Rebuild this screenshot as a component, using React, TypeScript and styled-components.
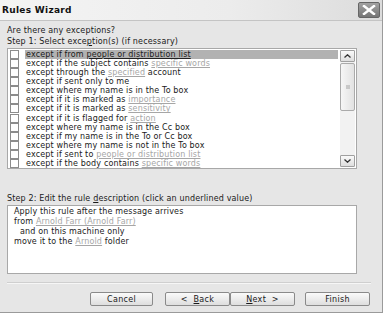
import React from 'react';
import styled, { createGlobalStyle } from 'styled-components';

const GlobalStyle = createGlobalStyle`
    html, body {
        margin: 0;
        padding: 0;
        background: #ffffff;
    }
    body {
        font-family: 'DejaVu Sans', Verdana, sans-serif;
        font-size: 8px;
        color: #1a1a1a;
    }
`;

// --- Window frame ---

const Window = styled.div`
    width: 382px;
    height: 312px;
    background: #e6e6e6;
    border-right: 1px solid #9a9a9a;
    border-bottom: 1px solid #9a9a9a;
    display: flex;
    flex-direction: column;
`;

const TitleBar = styled.div`
    height: 20px;
    flex-shrink: 0;
    display: flex;
    align-items: center;
    justify-content: space-between;
    padding: 0 2px 0 2px;
    background: linear-gradient(to right, #f4f4f4 0%, #ececec 60%, #dcdcdc 100%);
    border-bottom: 1px solid #c4c4c4;
`;

const Title = styled.span`
    font-weight: bold;
    font-size: 9px;
    letter-spacing: 0.3px;
    color: #111;
`;

const CloseButton = styled.div`
    width: 22px;
    height: 16px;
    border-radius: 2px;
    background: linear-gradient(to bottom, #a2a2a2, #767676);
    border: 1px solid #666;
    display: flex;
    align-items: center;
    justify-content: center;
    box-sizing: border-box;
`;

const Body = styled.div`
    flex: 1;
    display: flex;
    flex-direction: column;
    padding: 4px 0 0 7px;
`;

const Label = styled.div<{ gap?: number }>`
    height: 11px;
    line-height: 11px;
    margin-top: ${p => p.gap ?? 0}px;
    white-space: nowrap;
    letter-spacing: 0.15px;
`;

// --- Exception list ---

const ListBox = styled.div`
    width: 350px;
    height: 121px;
    margin-top: 1px;
    box-sizing: border-box;
    background: #fff;
    border: 1px solid #a8a8a8;
    display: flex;
`;

const Rows = styled.div`
    flex: 1;
    padding-top: 0.5px;
    overflow: hidden;
`;

const Row = styled.div`
    height: 9.15px;
    display: flex;
    align-items: center;
    white-space: nowrap;
    letter-spacing: 0.15px;
`;

const Check = styled.span`
    width: 7px;
    height: 7px;
    margin: 0 6px 0 2px;
    border: 1px solid #8c8c8c;
    background: #fff;
    flex-shrink: 0;
`;

const RowText = styled.span<{ selected?: boolean }>`
    flex: 1;
    height: 9px;
    line-height: 9px;
    padding-left: 1px;
    background: ${p => (p.selected ? '#b2b2b2' : 'transparent')};
`;

const Link = styled.span`
    color: #a6a6a6;
    text-decoration: underline;
`;

const SelectedLink = styled.span`
    color: #222;
    text-decoration: underline;
`;

const ScrollBar = styled.div`
    width: 15px;
    margin: 1px 1px 1px 2px;
    display: flex;
    flex-direction: column;
    background: #f2f2f2;
`;

const ScrollButton = styled.div`
    height: 10px;
    border: 1px solid #a0a0a0;
    border-radius: 1px;
    background: linear-gradient(to bottom, #fafafa, #dedede);
    display: flex;
    align-items: center;
    justify-content: center;
`;

const Track = styled.div`
    flex: 1;
    padding: 1px 0;
    display: flex;
    flex-direction: column;
`;

const Thumb = styled.div`
    height: 46px;
    border: 1px solid #aaa;
    border-radius: 2px;
    background: linear-gradient(to right, #f6f6f6, #e2e2e2);
    display: flex;
    align-items: center;
    justify-content: center;
`;

const Grip = styled.div`
    width: 4px;
    height: 4px;
    background: #c8c8c8;
`;

// --- Description ---

const DescBox = styled.div`
    width: 350px;
    height: 69px;
    margin-top: 1px;
    box-sizing: border-box;
    background: #fff;
    border: 1px solid #a8a8a8;
    padding: 1px 0 0 6px;
`;

const DescLine = styled.div<{ indent?: boolean }>`
    height: 10px;
    line-height: 10px;
    padding-left: ${p => (p.indent ? 6 : 0)}px;
    letter-spacing: 0.15px;
    white-space: nowrap;
`;

const Separator = styled.div`
    width: 364px;
    height: 0;
    margin-top: 8px;
    border-top: 1px solid #cfcfcf;
    border-bottom: 1px solid #f6f6f6;
`;

const ButtonRow = styled.div`
    display: flex;
    margin: 8px 0 0 83px;
`;

const Button = styled.div<{ space?: number; w?: number }>`
    width: ${p => p.w ?? 65}px;
    height: 14px;
    margin-left: ${p => p.space ?? 0}px;
    box-sizing: border-box;
    border: 1px solid #8a8a8a;
    border-radius: 2px;
    background: linear-gradient(to bottom, #fafafa 0%, #ececec 50%, #dedede 100%);
    display: flex;
    align-items: center;
    justify-content: center;
    white-space: pre;
    letter-spacing: 0.3px;
`;

const Key = styled.span`
    text-decoration: underline;
`;

const exceptions: React.ReactNode[] = [
    <>except if from <SelectedLink>people or distribution list</SelectedLink></>,
    <>except if the subject contains <Link>specific words</Link></>,
    <>except through the <Link>specified</Link> account</>,
    <>except if sent only to me</>,
    <>except where my name is in the To box</>,
    <>except if it is marked as <Link>importance</Link></>,
    <>except if it is marked as <Link>sensitivity</Link></>,
    <>except if it is flagged for <Link>action</Link></>,
    <>except where my name is in the Cc box</>,
    <>except if my name is in the To or Cc box</>,
    <>except where my name is not in the To box</>,
    <>except if sent to <Link>people or distribution list</Link></>,
    <>except if the body contains <Link>specific words</Link></>,
];

const RulesWizard: React.FC = () => (
    <Window>
        <TitleBar>
            <Title>Rules Wizard</Title>
            <CloseButton>
                <svg width="14" height="10" viewBox="0 0 14 10">
                    <path d="M2 1 L12 9 M12 1 L2 9" stroke="#fff" strokeWidth="2.4" strokeLinecap="square" />
                </svg>
            </CloseButton>
        </TitleBar>
        <Body>
            <Label>Are there any exceptions?</Label>
            <Label>Step 1: Select exce<Key>p</Key>tion(s) (if necessary)</Label>
            <ListBox>
                <Rows>
                    {exceptions.map((text, i) => (
                        <Row key={i}>
                            <Check />
                            <RowText selected={i === 0}>{text}</RowText>
                        </Row>
                    ))}
                </Rows>
                <ScrollBar>
                    <ScrollButton>
                        <svg width="7" height="4" viewBox="0 0 7 4">
                            <path d="M0.5 3.5 L3.5 0.8 L6.5 3.5" stroke="#333" strokeWidth="1.3" fill="none" />
                        </svg>
                    </ScrollButton>
                    <Track>
                        <Thumb>
                            <Grip />
                        </Thumb>
                    </Track>
                    <ScrollButton>
                        <svg width="7" height="4" viewBox="0 0 7 4">
                            <path d="M0.5 0.5 L3.5 3.2 L6.5 0.5" stroke="#333" strokeWidth="1.3" fill="none" />
                        </svg>
                    </ScrollButton>
                </ScrollBar>
            </ListBox>
            <Label gap={24}>Step 2: Edit the rule <Key>d</Key>escription (click an underlined value)</Label>
            <DescBox>
                <DescLine>Apply this rule after the message arrives</DescLine>
                <DescLine>from <Link>Arnold Farr (Arnold Farr)</Link></DescLine>
                <DescLine indent>and on this machine only</DescLine>
                <DescLine>move it to the <Link>Arnold</Link> folder</DescLine>
            </DescBox>
            <Separator />
            <ButtonRow>
                <Button w={63}>Cancel</Button>
                <Button space={12}>{'<  '}<Key>B</Key>ack</Button>
                <Button>
                    <Key>N</Key>{'ext  >'}
                </Button>
                <Button space={10}>Finish</Button>
            </ButtonRow>
        </Body>
    </Window>
);

const App: React.FC = () => (
    <>
        <GlobalStyle />
        <RulesWizard />
    </>
);

export default App;
